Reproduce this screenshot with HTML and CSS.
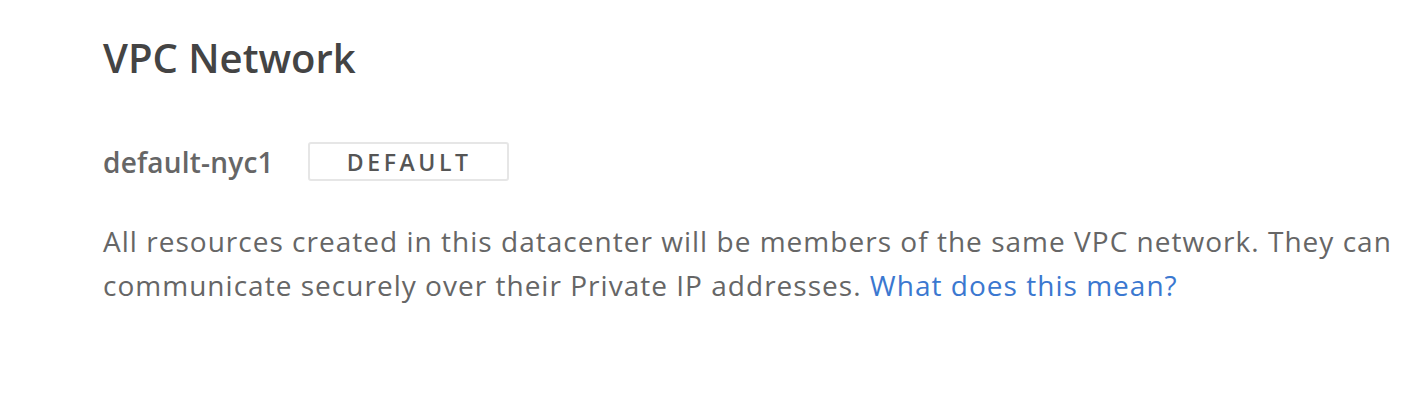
FILE: index.html
```html
<!DOCTYPE html>
<html>
<head>
<meta charset="utf-8">
<link rel="stylesheet" href="styles.css">
</head>
<body>
<section class="vpc">
  <h2 class="vpc-title">VPC Network</h2>
  <div class="vpc-row">
    <span class="vpc-name">default-nyc1</span>
    <span class="badge">DEFAULT</span>
  </div>
  <p class="vpc-desc">All resources created in this datacenter will be members of the same VPC network. They can communicate securely over their Private IP addresses. <a href="#" class="link">What does this mean?</a></p>
</section>
</body>
</html>
```

FILE: styles.css
```css
html, body {
  margin: 0;
  padding: 0;
  background: #fff;
}
body {
  font-family: "Open Sans", "Liberation Sans", sans-serif;
  color: #666;
}
.vpc {
  padding: 33px 0 0 103px;
  width: 1300px;
}
.vpc-title {
  margin: 0;
  font-size: 40px;
  font-weight: 600;
  color: #444;
  line-height: 50px;
}
.vpc-row {
  display: flex;
  align-items: center;
  gap: 34px;
  margin-top: 59px;
}
.vpc-name {
  font-size: 28px;
  font-weight: 600;
  letter-spacing: 0.2px;
  color: #666;
}
.badge {
  box-sizing: border-box;
  width: 201px;
  height: 39px;
  border: 2px solid #e6e6e6;
  border-radius: 3px;
  display: flex;
  align-items: center;
  justify-content: center;
  padding-left: 2px;
  font-size: 23px;
  font-weight: 600;
  letter-spacing: 3.6px;
  color: #555;
}
.vpc-desc {
  margin: 38px 0 0;
  font-size: 28px;
  letter-spacing: 1.02px;
  line-height: 44px;
  color: #666;
}
.link {
  color: #3b78d0;
  text-decoration: none;
}
```
